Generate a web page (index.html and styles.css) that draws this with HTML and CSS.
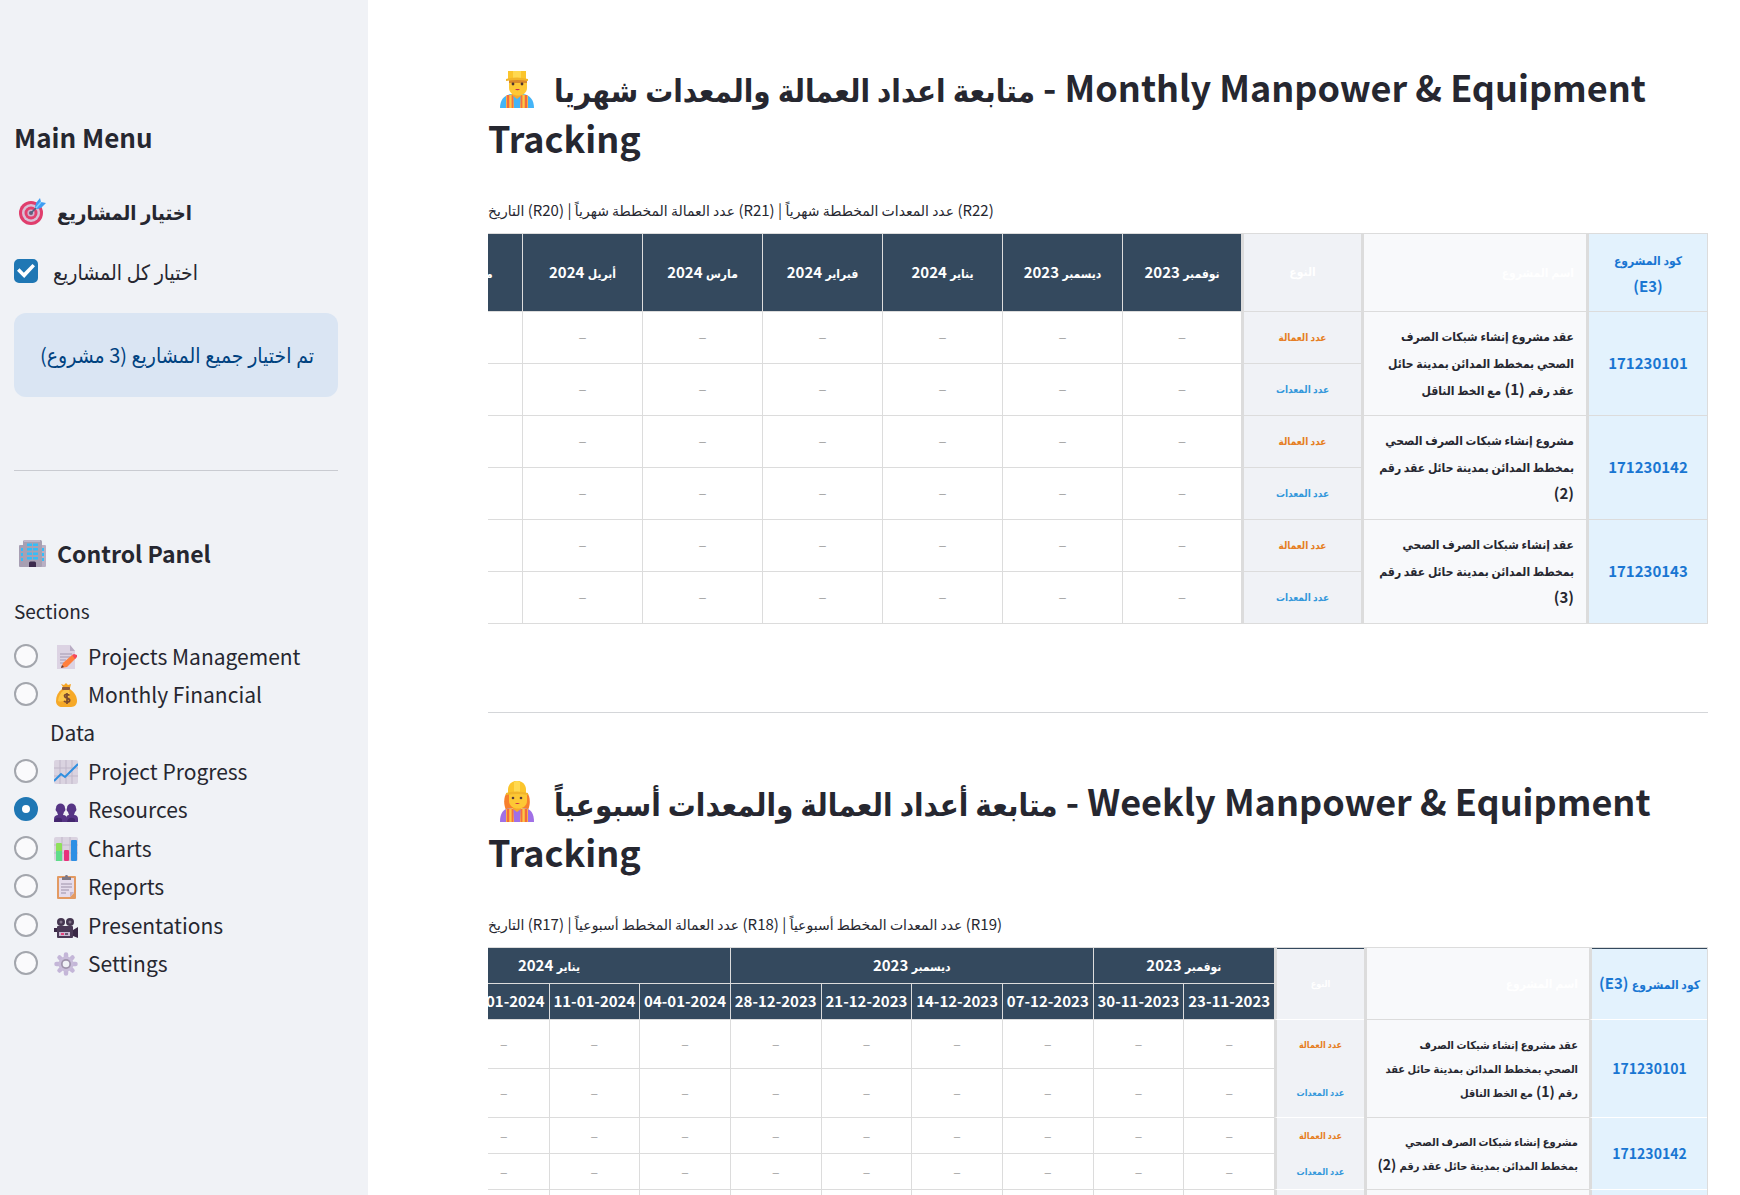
FILE: index.html
```html
<!DOCTYPE html>
<html lang="en">
<head>
<meta charset="utf-8">
<title>Manpower &amp; Equipment Tracking</title>
<link rel="stylesheet" href="styles.css">
</head>
<body>
<div class="app">
  <aside class="sidebar">
    <h2 class="menu-title">Main Menu</h2>

    <h3 class="side-heading">
      <svg class="side-icon" viewBox="0 0 27 27" aria-hidden="true">
        <circle cx="12" cy="15" r="12" fill="#e03d6c"/><circle cx="12" cy="15" r="9" fill="#d9bfd6"/><circle cx="12" cy="15" r="6.500" fill="#e2406e"/><circle cx="12" cy="15" r="3.600" fill="#cdb4d0"/><circle cx="12" cy="15" r="2" fill="#6d5a78"/>
        <path d="M12 15 20 7" stroke="#4b6584" stroke-width="1.600"/><path d="M16 9 17 5 21 0 22 4 27 5 22 10 18 11Z" fill="#3e9df2"/><path d="M17 10 22 4" stroke="#7fd0ff" stroke-width="1.500"/>
      </svg>
      <span class="ar ar-side-bold">اختيار المشاريع</span>
    </h3>

    <label class="check-row">
      <input type="checkbox" class="check" checked>
      <span class="ar ar-side">اختيار كل المشاريع</span>
    </label>

    <div class="notice" dir="rtl"><span class="ar ar-side">تم اختيار جميع المشاريع</span> (3 <span class="ar ar-side">مشروع</span>)</div>

    <hr class="side-rule">

    <h3 class="side-heading control">
      <svg class="side-icon" viewBox="0 0 27 27" aria-hidden="true">
        <rect x="0" y="5" width="7" height="22" rx="1" fill="#a79fb3"/><rect x="20" y="5" width="7" height="22" rx="1" fill="#b9b0c4"/><rect x="4" y="0" width="19" height="27" rx="1.500" fill="#a8a0b2"/><rect x="5" y="0" width="16" height="2" fill="#beb6c8"/>
        <g fill="#35bdf8"><rect x="8" y="3.500" width="5" height="2.500"/><rect x="14" y="3.500" width="5" height="2.500"/><rect x="8" y="8" width="5" height="2.500"/><rect x="14" y="8" width="5" height="2.500"/><rect x="8" y="12.500" width="5" height="2.500"/><rect x="14" y="12.500" width="5" height="2.500"/><rect x="8" y="17" width="5" height="2.500"/><rect x="14" y="17" width="5" height="2.500"/><rect x="2" y="8" width="2" height="3"/><rect x="2" y="13" width="2" height="3"/><rect x="2" y="18" width="2" height="3"/><rect x="23" y="8" width="2" height="3"/><rect x="23" y="13" width="2" height="3"/><rect x="23" y="18" width="2" height="3"/></g>
        <path d="M10 27v-4a1.500 1.500 0 0 1 1.500-1.500h4A1.500 1.500 0 0 1 17 23v4Z" fill="#3c2b4d"/>
      </svg>
      <span>Control Panel</span>
    </h3>

    <fieldset class="sections">
      <legend>Sections</legend>
      <div class="options">
      <label class="option"><input type="radio" name="section" class="radio"><span>
        <svg class="icon" viewBox="0 0 24 24" aria-hidden="true"><path d="M3 0h13l5 6v18H3Z" fill="#dcd3e3"/><path d="M16 0v6h5Z" fill="#b9adc4"/><path d="M6 9h12M6 12h10M6 15h6M6 18h4" stroke="#a397b0"/><path d="M7 23 9 18 18 10 22 13 13 22Z" fill="#ff7f3d"/><path d="m18 10 2-1 3 1v2l-2 2Z" fill="#f4485c"/><path d="m7 23 1-3 2 2Z" fill="#5a3c3c"/></svg>Projects Management</span></label>
      <label class="option"><input type="radio" name="section" class="radio"><span>
        <svg class="icon" viewBox="0 0 24 24" aria-hidden="true"><path d="M8 6C4 9 2 13 2 18c0 4 3 6 6 6h9c4 0 6-3 6-6 0-5-3-9-7-12Z" fill="#f6a928"/><path d="M10 7c-4 3-6 8-6 11 5 2 12-2 12-7l-1-4Z" fill="#fdc648"/><path d="m8 5 1-1-2-3 3 1 2-2 2 2 3-1-1 4Z" fill="#f5a524"/><rect x="8" y="4" width="8" height="3" rx="1" fill="#8c5a3c"/><path d="M15.500 12.500c-1-1.500-5-1.800-5 .6 0 2.500 5.200 1.500 5.200 4.200 0 2.500-4.500 2.400-5.700.6M13 10v11" fill="none" stroke="#7a4a2e" stroke-width="1.700"/></svg>Monthly Financial Data</span></label>
      <label class="option"><input type="radio" name="section" class="radio"><span>
        <svg class="icon" viewBox="0 0 24 24" aria-hidden="true"><rect width="24" height="24" rx="2" fill="#dad3e0"/><path d="M0 8h24M0 16h24M6 0v24M12 0v24M18 0v24" stroke="#c0b7c9"/><path d="m0 21 7-7 4 3L24 4" fill="none" stroke="#2f8fe0" stroke-width="2"/></svg>Project Progress</span></label>
      <label class="option"><input type="radio" name="section" class="radio" checked><span>
        <svg class="icon" viewBox="0 0 24 24" aria-hidden="true"><g fill="#563585"><path d="M2 10c0-6 9-6 9 0 1 2 0 3-1 4l-1 3c3 0 4 2 4 4v3H0v-3c0-3 2-4 4-4l-1-3c-1-1-2-2-1-4Z"/><path d="M13 10c0-6 9-6 9 0 1 2 0 3-1 4l-1 3c3 0 4 2 4 4v3H12v-3c0-2 1-4 3-4l-1-3c-1-1-2-2-1-4Z"/></g><path d="M0 24c1-5 5-5 8-3v3ZM13 24c1-5 5-5 8-3v3Z" fill="#43266e"/></svg>Resources</span></label>
      <label class="option"><input type="radio" name="section" class="radio"><span>
        <svg class="icon" viewBox="0 0 24 24" aria-hidden="true"><rect width="24" height="24" rx="2" fill="#dad3e0"/><path d="M0 8h24M0 16h24M8 0v24M16 0v24" stroke="#c0b7c9"/><rect x="2" y="6" width="6" height="18" rx="1" fill="#8ee05a"/><path d="M2 14h6v10H2Z" fill="#5fdc8a"/><rect x="10" y="13" width="5" height="11" rx="1" fill="#e8327c"/><rect x="17" y="3" width="6" height="21" rx="1" fill="#2e8fe4"/></svg>Charts</span></label>
      <label class="option"><input type="radio" name="section" class="radio"><span>
        <svg class="icon" viewBox="0 0 24 24" aria-hidden="true"><rect x="3" y="1" width="19" height="23" rx="1" fill="#e39a62"/><path d="M5 3h15v15l-4 4H5Z" fill="#e5dcec"/><path d="M20 17h-4v5Z" fill="#c1b2cc"/><path d="M7 9h11M7 12h11M7 15h8M7 18h5" stroke="#9c90a8"/><path d="M8 2h3c0-3 3-3 3 0h3v3H8Z" fill="#7e7886"/></svg>Reports</span></label>
      <label class="option"><input type="radio" name="section" class="radio"><span>
        <svg class="icon" viewBox="0 0 24 24" aria-hidden="true"><circle cx="7" cy="8" r="4" fill="#453650"/><circle cx="16" cy="8" r="4" fill="#453650"/><circle cx="7" cy="8" r="1.500" fill="#83758c"/><circle cx="16" cy="8" r="1.500" fill="#83758c"/><rect x="3" y="12" width="16" height="12" rx="1" fill="#4a3956"/><path d="M0 14h3v4H0ZM19 16l5-3v11l-5-2Z" fill="#3a2846"/><rect x="5" y="18" width="11" height="4" fill="#c9b9d2"/><rect x="7" y="19" width="3" height="2" fill="#e8437c"/><rect x="11" y="19" width="3" height="2" fill="#6a5a74"/></svg>Presentations</span></label>
      <label class="option"><input type="radio" name="section" class="radio"><span>
        <svg class="icon" viewBox="0 0 24 24" aria-hidden="true"><g stroke="#c4b6d8" stroke-width="4.500" stroke-linecap="round"><path d="M12 2.500v19M2.500 12h19M5.500 5.500l13 13M18.500 5.500l-13 13"/></g><circle cx="12" cy="12" r="7.500" fill="#c8bcd9"/><circle cx="12" cy="12" r="5" fill="#9e93ab"/><circle cx="12" cy="12" r="3.300" fill="#f0f2f6"/></svg>Settings</span></label>
      </div>
    </fieldset>
  </aside>

  <main class="main">
    <section>
      <h2 class="title"><svg class="worker" viewBox="0 0 34 41" aria-hidden="true">
          <path d="M0 41c0-8 4-13 11-14h12c7 1 11 6 11 14Z" fill="#44b4f7"/><path d="M6 29l7-2 4 3 4-3 7 2v12H6Z" fill="#fbc945"/><path d="M8 28v13M26 28v13" stroke="#f36a3e" stroke-width="2.500"/><path d="M13 27h8l-1 14h-6Z" fill="#44b4f7"/><path d="M12.500 28v13M21.500 28v13" stroke="#f7703c" stroke-width="1.800"/>
          <path d="M12 24h10v4l-5 4-5-4Z" fill="#f7a92a"/><path d="M9 13h18v8c0 10-18 10-18 0Z" fill="#fdc835"/><path d="M9 13h18v3H9Z" fill="#d98a2a"/><circle cx="13" cy="17" r="1.400" fill="#4d3232"/><circle cx="22" cy="17" r="1.400" fill="#4d3232"/><path d="M15 22q2.500 2.500 5 0Z" fill="#c32a4e"/><path d="M8 13V4h18v9Z" fill="#fbc52c"/><path d="M13 4h8v8h-8Z" fill="#ffd950"/><path d="M6 14v-2q11-3 22 0v2q-11-2-22 0Z" fill="#f2b52a"/></svg><span class="ar ar-title">متابعة اعداد العمالة والمعدات شهريا</span> - Monthly Manpower &amp; Equipment Tracking</h2>
      <p class="caption"><span class="ar ar-caption">التاريخ</span> (R20) | <span class="ar ar-caption">عدد العمالة المخططة شهرياً</span> (R21) | <span class="ar ar-caption">عدد المعدات المخططة شهرياً</span> (R22)</p>
      <div class="scroller" dir="rtl">
        <table class="grid monthly">
          <colgroup><col class="c-code"><col class="c-name"><col class="c-type"><col class="c-first"><col span="7"></colgroup>
          <thead>
            <tr>
              <th class="code"><span class="ar">كود المشروع</span><br>(E3)</th>
              <th class="name"><span class="ar">اسم المشروع</span></th>
              <th class="type"><span class="ar">النوع</span></th>
              <th><span class="ar">نوفمبر</span> 2023</th><th><span class="ar">ديسمبر</span> 2023</th><th><span class="ar">يناير</span> 2024</th><th><span class="ar">فبراير</span> 2024</th><th><span class="ar">مارس</span> 2024</th><th><span class="ar">أبريل</span> 2024</th><th><span class="ar">مايو</span> 2024</th><th><span class="ar">يونيو</span> 2024</th>
            </tr>
          </thead>
          <tbody>
            <tr><td class="code" rowspan="2">171230101</td><td class="name" rowspan="2"><span class="ar">عقد مشروع إنشاء شبكات الصرف<br>الصحي بمخطط المدائن بمدينة حائل<br>عقد رقم</span> (1) <span class="ar">مع الخط الناقل</span></td><td class="type labour"><span class="ar">عدد العمالة</span></td><td>–</td><td>–</td><td>–</td><td>–</td><td>–</td><td>–</td><td>–</td><td>–</td></tr>
            <tr><td class="type gear"><span class="ar">عدد المعدات</span></td><td>–</td><td>–</td><td>–</td><td>–</td><td>–</td><td>–</td><td>–</td><td>–</td></tr>
            <tr><td class="code" rowspan="2">171230142</td><td class="name" rowspan="2"><span class="ar">مشروع إنشاء شبكات الصرف الصحي<br>بمخطط المدائن بمدينة حائل عقد رقم</span><br>(2)</td><td class="type labour"><span class="ar">عدد العمالة</span></td><td>–</td><td>–</td><td>–</td><td>–</td><td>–</td><td>–</td><td>–</td><td>–</td></tr>
            <tr><td class="type gear"><span class="ar">عدد المعدات</span></td><td>–</td><td>–</td><td>–</td><td>–</td><td>–</td><td>–</td><td>–</td><td>–</td></tr>
            <tr><td class="code" rowspan="2">171230143</td><td class="name" rowspan="2"><span class="ar">عقد إنشاء شبكات الصرف الصحي<br>بمخطط المدائن بمدينة حائل عقد رقم</span><br>(3)</td><td class="type labour"><span class="ar">عدد العمالة</span></td><td>–</td><td>–</td><td>–</td><td>–</td><td>–</td><td>–</td><td>–</td><td>–</td></tr>
            <tr><td class="type gear"><span class="ar">عدد المعدات</span></td><td>–</td><td>–</td><td>–</td><td>–</td><td>–</td><td>–</td><td>–</td><td>–</td></tr>
          </tbody>
        </table>
      </div>
    </section>

    <hr class="main-rule">

    <section>
      <h2 class="title"><svg class="worker" viewBox="0 0 34 41" aria-hidden="true">
          <path d="M7 12c-3 2-4 11-1 17h22c3-6 2-15-1-17Z" fill="#f77f2c"/><path d="M0 41c0-9 3-13 10-14h14c7 1 10 5 10 14Z" fill="#a070e6"/><path d="M6 28l7-1 4 4 4-4 7 1v13H6Z" fill="#fbc945"/><path d="M8 28v13M26 28v13" stroke="#f36a3e" stroke-width="2.500"/><path d="M13 27h8l-1 14h-6Z" fill="#a070e6"/><path d="M12.500 28v13M21.500 28v13" stroke="#f7703c" stroke-width="1.800"/>
          <path d="M13 24h8v4l-4 3-4-3Z" fill="#f7a92a"/><path d="M9 12h18v8c0 10-18 10-18 0Z" fill="#fdc835"/><circle cx="13" cy="17" r="1.300" fill="#5a3b3b"/><circle cx="21" cy="17" r="1.300" fill="#5a3b3b"/><path d="M15 22q2 2 5 0Z" fill="#c32a4e"/><path d="M8 13V8C9-3 25-3 26 8v5Z" fill="#fbc52c"/><path d="M14 1q3-2 6 0v10h-6Z" fill="#ffd950"/><path d="M6 14v-2q11-3 22 0v2q-11-2-22 0Z" fill="#f2b52a"/></svg><span class="ar ar-title">متابعة أعداد العمالة والمعدات أسبوعياً</span> - Weekly Manpower &amp; Equipment Tracking</h2>
      <p class="caption"><span class="ar ar-caption">التاريخ</span> (R17) | <span class="ar ar-caption">عدد العمالة المخطط أسبوعياً</span> (R18) | <span class="ar ar-caption">عدد المعدات المخطط أسبوعياً</span> (R19)</p>
      <div class="scroller" dir="rtl">
        <table class="grid weekly">
          <colgroup><col class="c-code"><col class="c-name"><col class="c-type"><col span="10"></colgroup>
          <thead>
            <tr>
              <th class="code" rowspan="2"><span class="ar">كود المشروع</span> (E3)</th>
              <th class="name" rowspan="2"><span class="ar">اسم المشروع</span></th>
              <th class="type" rowspan="2"><span class="ar">النوع</span></th>
              <th colspan="2"><span class="ar">نوفمبر</span> 2023</th><th colspan="4"><span class="ar">ديسمبر</span> 2023</th><th colspan="4"><span class="ar">يناير</span> 2024</th>
            </tr>
            <tr><th>23-11-2023</th><th>30-11-2023</th><th>07-12-2023</th><th>14-12-2023</th><th>21-12-2023</th><th>28-12-2023</th><th>04-01-2024</th><th>11-01-2024</th><th>18-01-2024</th><th>25-01-2024</th></tr>
          </thead>
          <tbody>
            <tr class="tall"><td class="code" rowspan="2">171230101</td><td class="name" rowspan="2"><span class="ar">عقد مشروع إنشاء شبكات الصرف<br>الصحي بمخطط المدائن بمدينة حائل عقد<br>رقم</span> (1) <span class="ar">مع الخط الناقل</span></td><td class="type labour"><span class="ar">عدد العمالة</span></td><td>–</td><td>–</td><td>–</td><td>–</td><td>–</td><td>–</td><td>–</td><td>–</td><td>–</td><td>–</td></tr>
            <tr class="tall"><td class="type gear"><span class="ar">عدد المعدات</span></td><td>–</td><td>–</td><td>–</td><td>–</td><td>–</td><td>–</td><td>–</td><td>–</td><td>–</td><td>–</td></tr>
            <tr><td class="code" rowspan="2">171230142</td><td class="name" rowspan="2"><span class="ar">مشروع إنشاء شبكات الصرف الصحي<br>بمخطط المدائن بمدينة حائل عقد رقم</span> (2)</td><td class="type labour"><span class="ar">عدد العمالة</span></td><td>–</td><td>–</td><td>–</td><td>–</td><td>–</td><td>–</td><td>–</td><td>–</td><td>–</td><td>–</td></tr>
            <tr><td class="type gear"><span class="ar">عدد المعدات</span></td><td>–</td><td>–</td><td>–</td><td>–</td><td>–</td><td>–</td><td>–</td><td>–</td><td>–</td><td>–</td></tr>
            <tr><td class="code" rowspan="2">171230143</td><td class="name" rowspan="2"><span class="ar">عقد إنشاء شبكات الصرف الصحي<br>بمخطط المدائن بمدينة حائل عقد رقم</span> (3)</td><td class="type labour"><span class="ar">عدد العمالة</span></td><td>–</td><td>–</td><td>–</td><td>–</td><td>–</td><td>–</td><td>–</td><td>–</td><td>–</td><td>–</td></tr>
            <tr><td class="type gear"><span class="ar">عدد المعدات</span></td><td>–</td><td>–</td><td>–</td><td>–</td><td>–</td><td>–</td><td>–</td><td>–</td><td>–</td><td>–</td></tr>
          </tbody>
        </table>
      </div>
    </section>
  </main>
</div>
</body>
</html>
```

FILE: styles.css
```css
* { box-sizing: border-box; }

body {
  margin: 0;
  font-family: "Noto Sans CJK SC", "DejaVu Sans", sans-serif;
  color: #262730;
  background: #fff;
}

h2, h3, p { margin: 0; }

.ar {
  font-family: "Noto Sans CJK SC", "DejaVu Sans Condensed", "DejaVu Sans", sans-serif;
  line-height: 1;
}

.app {
  display: flex;
  height: 100vh;
  overflow: hidden;
}

/* Sidebar */
.sidebar {
  flex: 0 0 368px;
  padding: 122px 30px 40px 14px;
  background: #f0f2f6;
  overflow-y: auto;
  scrollbar-width: none;
}

.menu-title {
  font-size: 26px;
  line-height: 30px;
  font-weight: 700;
}

.side-heading {
  display: flex;
  align-items: center;
  margin-top: 46px;
  font-size: 23px;
  line-height: 30px;
  font-weight: 700;
}

.side-icon {
  width: 27px;
  height: 27px;
  margin: 0 11px 0 5px;
}

.ar-side { font-size: 21px; }
.ar-side-bold { font-size: 20px; }

.check-row {
  display: flex;
  align-items: center;
  gap: 15px;
  height: 24px;
  margin-top: 34px;
}

.check {
  appearance: none;
  display: grid;
  place-items: center;
  width: 24px;
  height: 24px;
  margin: 0;
  border: 2px solid #a3a6ad;
  border-radius: 5px;
  background: #fafafc;
}

.check:checked {
  border-color: #1f77b4;
  background: #1f77b4;
}

.check:checked::before {
  content: "";
  width: 18px;
  height: 14px;
  background: #fff;
  clip-path: polygon(0 48%, 14% 30%, 38% 62%, 86% 0, 100% 16%, 40% 100%);
}

.notice {
  margin-top: 30px;
  padding: 24px;
  border-radius: 12px;
  background: #dae5f3;
  color: #004280;
  font-size: 20px;
  line-height: 36px;
  white-space: nowrap;
}

.side-rule, .main-rule {
  border: 0;
  border-top: 1px solid #c9cbd1;
}

.side-rule { margin: 73px 0 67px; }

.control { margin-top: 0; }

.sections {
  margin: 31px 0 0;
  padding: 0;
  border: 0;
}

.sections legend {
  padding: 0;
  margin-bottom: 14px;
  font-size: 19px;
  line-height: 24px;
}

.options {
  display: flex;
  flex-direction: column;
  justify-content: space-between;
  min-height: 345px;
}

.option {
  display: flex;
  gap: 12px;
  padding-right: 28px;
  font-size: 21px;
  line-height: 38px;
}

.radio {
  appearance: none;
  flex: none;
  width: 24px;
  height: 24px;
  margin: 7px 0;
  border: 2px solid #a3a6ad;
  border-radius: 50%;
  background: #fafafc;
}

.radio:checked {
  border: 8px solid #1f77b4;
  background: #fff;
}

.icon {
  width: 24px;
  height: 24px;
  margin: 0 10px 0 4px;
  vertical-align: -4px;
}

/* Main column */
.main {
  flex: 1;
  min-width: 0;
  padding: 61px 32px 40px 120px;
  overflow-y: auto;
  scrollbar-width: none;
}

.title {
  font-size: 36px;
  line-height: 51px;
  font-weight: 700;
}

.worker {
  width: 34px;
  height: 41px;
  margin: -6px 20px 0 12px;
  vertical-align: -6px;
}

.ar-title { font-size: 31px; }

.caption {
  margin: 35px 0 11px;
  font-size: 15px;
  line-height: 24px;
}

.ar-caption {
  font-family: "Noto Sans CJK SC", "DejaVu Sans", sans-serif;
  font-size: 14px;
}

.main-rule {
  margin: 88px 0 62px;
  border-color: #d4d6d9;
}

.scroller {
  overflow-x: auto;
  scrollbar-width: none;
}

/* Tables */
.grid {
  table-layout: fixed;
  border-collapse: separate;
  border-spacing: 0;
  border-top: 1px solid #dcdcdc;
  border-right: 1px solid #dcdcdc;
  text-align: center;
  white-space: nowrap;
}

.grid th, .grid td {
  padding: 0 0 2px;
  border-left: 1px solid #dcdcdc;
  border-bottom: 1px solid #dcdcdc;
}

.grid th {
  background: #34495e;
  color: #fff;
  font-size: 15px;
  font-weight: 700;
}

.grid td { color: #aaa; font-size: 15px; }

.grid .code, .grid .name, .grid .type {
  border-left: 3px solid #dcdcdc;
  font-weight: 700;
}

.grid .name, .grid .type { padding-bottom: 4px; }

.grid .code { background: #e3f2fd; color: #1976d2; }
.grid .name { background: #f8f9fb; text-align: right; }
.grid .type { background: #f0f2f6; font-size: 12px; }
.grid td.name { color: #262730; }
.grid td.labour { color: #e67e22; }
.grid td.gear { color: #3498db; }

.monthly { width: 1426px; }
.monthly .c-code { width: 121px; }
.monthly .c-name { width: 225px; }
.monthly .c-type { width: 120px; }
.monthly .c-first { width: 119px; }
.monthly th { height: 78px; line-height: 27px; }
.monthly td { height: 52px; line-height: 27px; }
.monthly .name { padding-right: 12px; }
.monthly .ar { font-size: 12px; }
.monthly td.type .ar { font-size: 10px; }

.weekly { width: 1341px; }
.weekly .c-code { width: 118px; }
.weekly .c-name { width: 225px; }
.weekly .c-type { width: 90px; }
.weekly th { height: 36px; line-height: 24px; }
.weekly td { height: 36px; line-height: 24px; font-size: 14px; }
.weekly .tall td { height: 49px; }
.weekly .name { padding-right: 11px; }
.weekly th .ar { font-size: 12px; }
.weekly td .ar { font-size: 11px; }
.weekly .type .ar { font-size: 9px; }
.weekly th.code, .weekly th.type { box-shadow: inset 0 1px #34495e; }
.weekly .code, .weekly .type { border-bottom-color: #fff; }
.weekly td.labour { border-bottom: 0; }
```
